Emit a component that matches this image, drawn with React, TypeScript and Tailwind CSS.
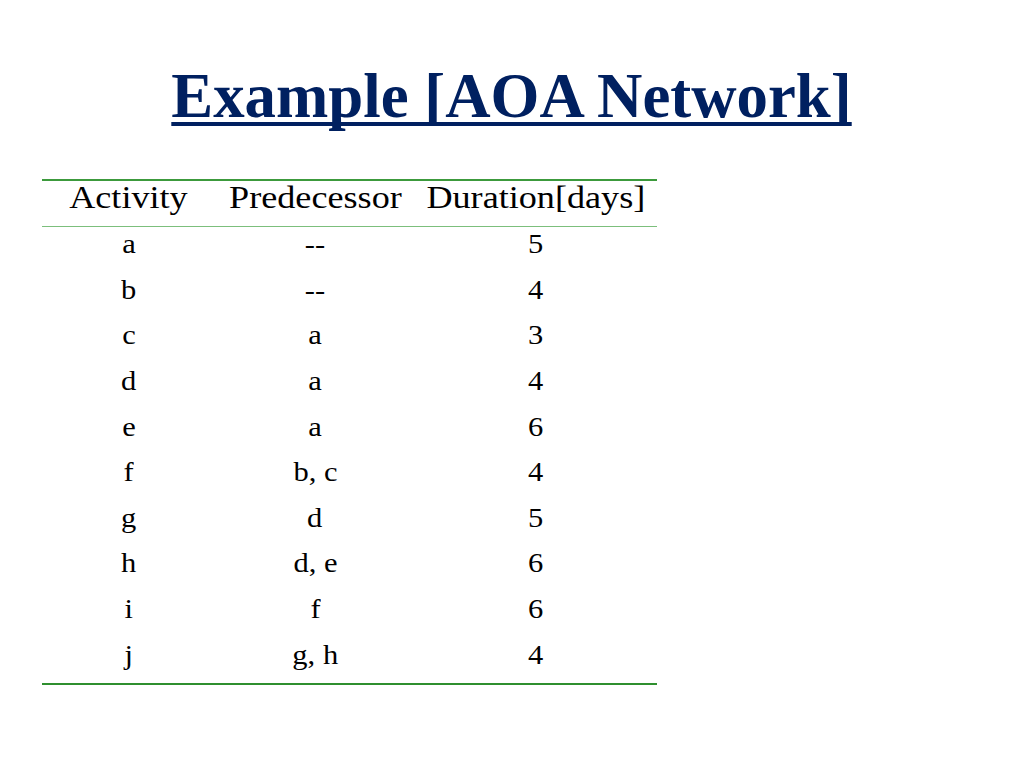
const rows: [string, string, string][] = [
  ['a', '--', '5'],
  ['b', '--', '4'],
  ['c', 'a', '3'],
  ['d', 'a', '4'],
  ['e', 'a', '6'],
  ['f', 'b, c', '4'],
  ['g', 'd', '5'],
  ['h', 'd, e', '6'],
  ['i', 'f', '6'],
  ['j', 'g, h', '4'],
];

function Cell({ children, header }: { children: React.ReactNode; header?: boolean }) {
  return (
    <div className="flex items-center justify-center">
      <span
        className={`inline-block scale-x-[1.13] whitespace-pre ${header ? 'text-[32px]' : 'text-[27px]'}`}
      >
        {children}
      </span>
    </div>
  );
}

export default function App() {
  return (
    <div
      className="w-[1024px] h-[768px] bg-white text-black overflow-hidden"
      style={{ fontFamily: '"Liberation Serif", "Times New Roman", serif' }}
    >
      <div className="pt-[60px] flex justify-center">
        <h1 className="text-[62.5px] leading-[72px] font-bold text-[#002060] underline decoration-[4px] underline-offset-[5px] [text-decoration-skip-ink:none] scale-x-[1.005]">
          Example [AOA Network]
        </h1>
      </div>

      <div className="ml-[42px] mt-[47px] w-[615px]">
        <div className="h-[2px] bg-[#3c9a3c]" />
        <div className="grid grid-cols-[173px_200px_242px] h-[45px] leading-none pb-[14px]">
          <Cell header>Activity</Cell>
          <Cell header>Predecessor</Cell>
          <Cell header>Duration[days]</Cell>
        </div>
        <div className="h-px bg-[#7cbf7c]" />
        {rows.map(([act, pred, dur]) => (
          <div key={act} className="grid grid-cols-[173px_200px_242px] h-[45.6px] leading-none pb-[10px]">
            <Cell>{act}</Cell>
            <Cell>{pred}</Cell>
            <Cell>{dur}</Cell>
          </div>
        ))}
        <div className="h-[2px] bg-[#2f8f2f]" />
      </div>
    </div>
  );
}
